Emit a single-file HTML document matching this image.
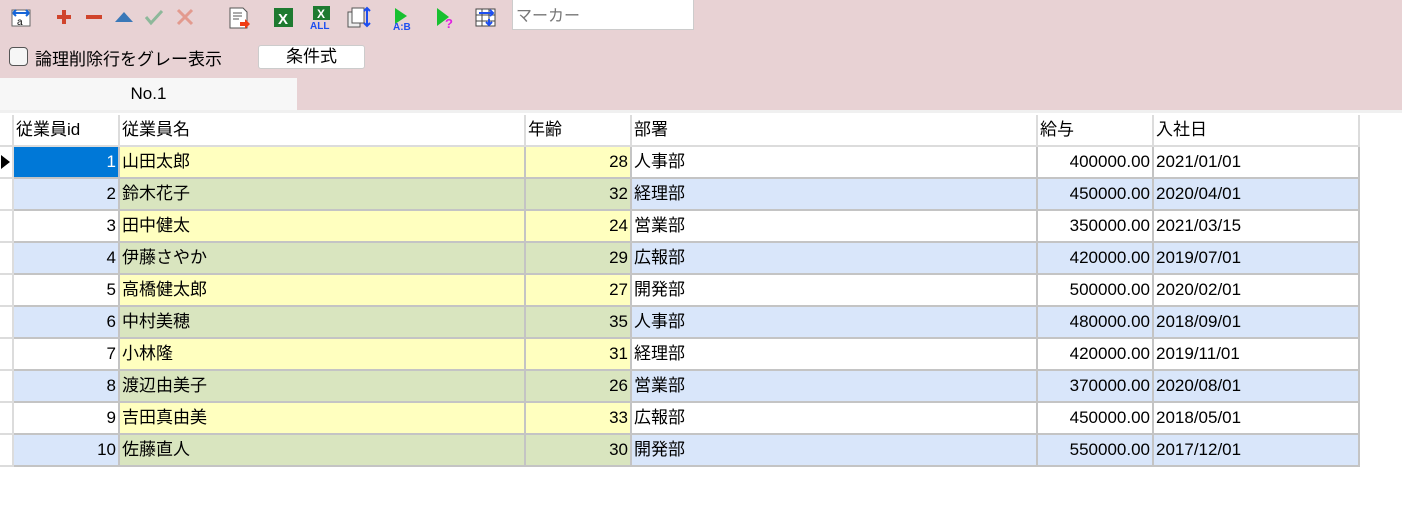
<!DOCTYPE html>
<html><head><meta charset="utf-8"><style>
*{margin:0;padding:0;box-sizing:border-box}
body{width:1402px;height:510px;background:#fff;font-family:"Liberation Sans","Noto Sans CJK JP",sans-serif;font-size:17px;color:#000;position:relative;overflow:hidden}
#top{position:absolute;left:0;top:0;width:1402px;height:110px;background:#e8d2d4}
.ic{position:absolute;top:6px}
#marker{position:absolute;left:512px;top:0;width:182px;height:30px;background:#fff;border:1px solid #ccc;border-top:none;color:#777;font-size:16px;padding:2px 3px}
#chk{position:absolute;left:9px;top:47px;width:19px;height:19px;border:1px solid #555;border-radius:4px;background:#f6f6f6}
#lbl{position:absolute;left:35px;top:45px;font-size:17px}
#btn{position:absolute;left:258px;top:45px;width:107px;height:24px;background:#fff;border:1px solid #ccc;border-radius:3px;text-align:center;font-size:17px;line-height:22px}
#tab{position:absolute;left:0;top:78px;width:297px;height:32px;background:#f7f7f7;text-align:center;line-height:32px;font-size:17px}
#line{position:absolute;left:0;top:110px;width:1402px;height:3px;background:#f0f0f0}
table{position:absolute;left:0;top:115px;border-collapse:separate;border-spacing:0;table-layout:fixed}
td{height:32px;border-right:2px solid #c4c4c4;border-bottom:2px solid #c4c4c4;padding:0 2px;white-space:nowrap;font-size:17px;line-height:30px;overflow:hidden}
tr.h td{height:31px;border-color:#dcdcdc;background:#fff}
.r{text-align:right}
.w{background:#fff}.b{background:#d9e6fa}.y{background:#ffffbf}.g{background:#d9e5bf}
td.rh{background:#fff;border-color:#dcdcdc;padding:0}
#arrow{position:absolute;left:1px;top:155px;width:0;height:0;border-top:7px solid transparent;border-bottom:7px solid transparent;border-left:9px solid #000}
</style></head><body>
<div id="top">
<svg class="ic" style="left:10px" width="22" height="22" viewBox="0 0 22 22"><rect x="2" y="4" width="18" height="16" fill="#fff" stroke="#666"/><path d="M3 7h16M3 7l3-3M3 7l3 3M19 7l-3-3M19 7l-3 3" stroke="#1565d8" stroke-width="2" fill="none"/><text x="7" y="19" font-size="10" font-family="Liberation Sans">a</text></svg>
<svg class="ic" style="left:54px" width="20" height="22"><path d="M10 4v14M3 11h14" stroke="#d0442c" stroke-width="4"/></svg>
<svg class="ic" style="left:84px" width="20" height="22"><path d="M2 11h16" stroke="#d0442c" stroke-width="4"/></svg>
<svg class="ic" style="left:114px" width="20" height="22"><path d="M1 16h18L10 6z" fill="#3a78b8"/></svg>
<svg class="ic" style="left:144px" width="20" height="22"><path d="M2 11l5 6L18 5" stroke="#8db89a" stroke-width="3" fill="none"/></svg>
<svg class="ic" style="left:175px" width="20" height="22"><path d="M3 4l14 14M17 4L3 18" stroke="#e39a8e" stroke-width="3"/></svg>
<svg class="ic" style="left:228px" width="24" height="24"><path d="M2 2h13l4 4v16H2z" fill="#fff" stroke="#555"/><path d="M5 7h9M5 10h9M5 13h6" stroke="#555"/><path d="M12 16h5v-3l5 5-5 5v-3h-5z" fill="#f03c14"/></svg>
<svg class="ic" style="left:273px" width="22" height="22"><rect x="1" y="2" width="19" height="19" fill="#1e7a30"/><text x="5" y="18" font-size="15" font-weight="bold" fill="#fff" font-family="Liberation Sans">X</text></svg>
<svg class="ic" style="left:310px" width="24" height="24"><rect x="3" y="0" width="17" height="14" fill="#1e7a30"/><text x="7" y="12" font-size="12" font-weight="bold" fill="#fff" font-family="Liberation Sans">X</text><text x="0" y="23" font-size="10" font-weight="bold" fill="#1d4ef0" font-family="Liberation Sans">ALL</text></svg>
<svg class="ic" style="left:347px" width="24" height="24"><rect x="1" y="6" width="12" height="15" fill="#eee" stroke="#555"/><rect x="5" y="2" width="12" height="15" fill="#fff" stroke="#555"/><path d="M20 2v18M17 5l3-3 3 3M17 17l3 3 3-3" stroke="#1d4ef0" stroke-width="2" fill="none"/></svg>
<svg class="ic" style="left:393px" width="24" height="26"><path d="M2 2v16l12-8z" fill="#18c030"/><text x="0" y="24" font-size="10" font-weight="bold" fill="#1d4ef0" font-family="Liberation Sans">A:B</text></svg>
<svg class="ic" style="left:435px" width="22" height="24"><path d="M2 2v18l12-9z" fill="#18c030"/><text x="10" y="22" font-size="13" font-weight="bold" fill="#e020e0" font-family="Liberation Sans">?</text></svg>
<svg class="ic" style="left:475px" width="22" height="22"><rect x="1" y="3" width="19" height="17" fill="#fff" stroke="#444"/><path d="M1 9h19M1 15h19M7 3v17M14 3v17" stroke="#444"/><path d="M4 7h14M15 4l3 3-3 3M14 13v6M11 16l3 3 3-3" stroke="#1d4ef0" stroke-width="2" fill="none"/></svg>
<div id="marker">マーカー</div>
<div id="chk"></div><div id="lbl">論理削除行をグレー表示</div>
<div id="btn">条件式</div>
<div id="tab">No.1</div>
</div>
<div id="line"></div>
<table>
<colgroup><col style="width:14px"><col style="width:106px"><col style="width:406px"><col style="width:106px"><col style="width:406px"><col style="width:116px"><col style="width:206px"></colgroup>
<tr class="h"><td class="rh"></td><td>従業員id</td><td>従業員名</td><td>年齢</td><td>部署</td><td>給与</td><td>入社日</td></tr>
<tr><td class="rh"></td><td class="r" style="background:#0078d7;color:#fff">1</td><td class="y">山田太郎</td><td class="y r">28</td><td class="w">人事部</td><td class="w r">400000.00</td><td class="w">2021/01/01</td></tr>
<tr><td class="rh"></td><td class="b r">2</td><td class="g">鈴木花子</td><td class="g r">32</td><td class="b">経理部</td><td class="b r">450000.00</td><td class="b">2020/04/01</td></tr>
<tr><td class="rh"></td><td class="w r">3</td><td class="y">田中健太</td><td class="y r">24</td><td class="w">営業部</td><td class="w r">350000.00</td><td class="w">2021/03/15</td></tr>
<tr><td class="rh"></td><td class="b r">4</td><td class="g">伊藤さやか</td><td class="g r">29</td><td class="b">広報部</td><td class="b r">420000.00</td><td class="b">2019/07/01</td></tr>
<tr><td class="rh"></td><td class="w r">5</td><td class="y">高橋健太郎</td><td class="y r">27</td><td class="w">開発部</td><td class="w r">500000.00</td><td class="w">2020/02/01</td></tr>
<tr><td class="rh"></td><td class="b r">6</td><td class="g">中村美穂</td><td class="g r">35</td><td class="b">人事部</td><td class="b r">480000.00</td><td class="b">2018/09/01</td></tr>
<tr><td class="rh"></td><td class="w r">7</td><td class="y">小林隆</td><td class="y r">31</td><td class="w">経理部</td><td class="w r">420000.00</td><td class="w">2019/11/01</td></tr>
<tr><td class="rh"></td><td class="b r">8</td><td class="g">渡辺由美子</td><td class="g r">26</td><td class="b">営業部</td><td class="b r">370000.00</td><td class="b">2020/08/01</td></tr>
<tr><td class="rh"></td><td class="w r">9</td><td class="y">吉田真由美</td><td class="y r">33</td><td class="w">広報部</td><td class="w r">450000.00</td><td class="w">2018/05/01</td></tr>
<tr><td class="rh"></td><td class="b r">10</td><td class="g">佐藤直人</td><td class="g r">30</td><td class="b">開発部</td><td class="b r">550000.00</td><td class="b">2017/12/01</td></tr>
</table>
<div id="arrow"></div>
</body></html>
